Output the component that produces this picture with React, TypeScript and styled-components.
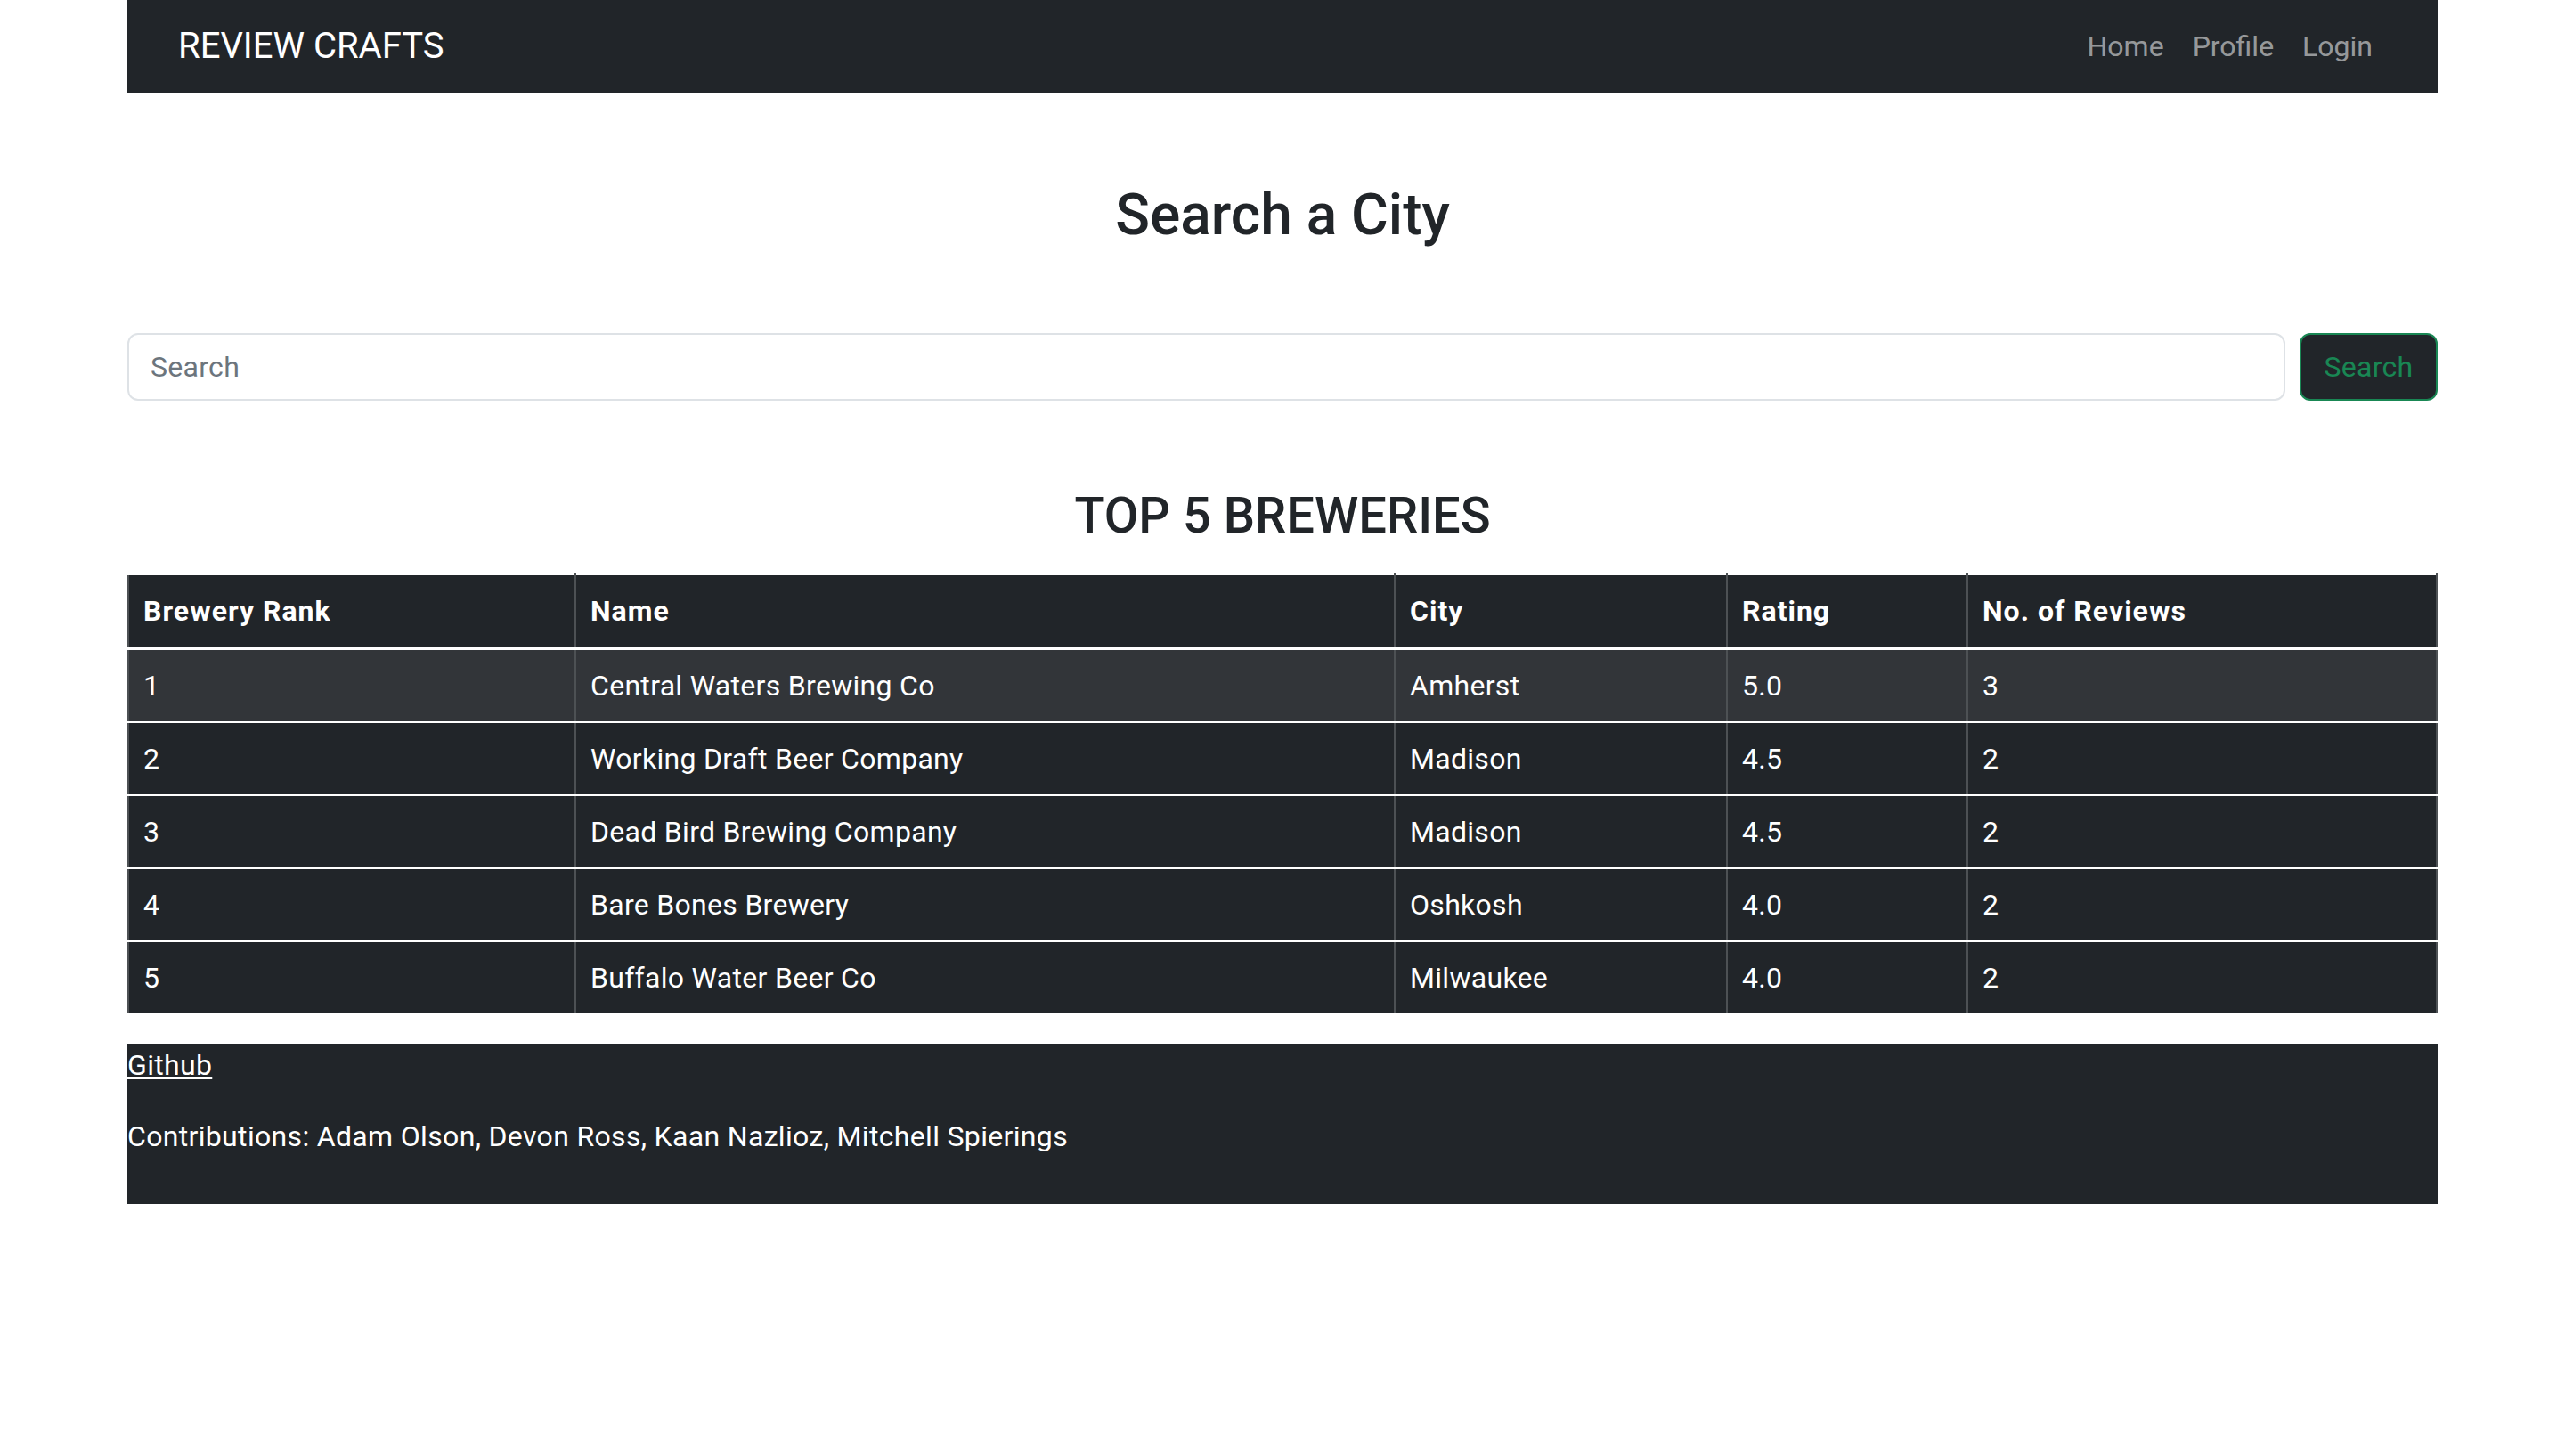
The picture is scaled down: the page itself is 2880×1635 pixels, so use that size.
import React from "react";
import styled, { createGlobalStyle } from "styled-components";

const GlobalStyle = createGlobalStyle`
  html, body { margin: 0; padding: 0; background: #ffffff; }
  body {
    font-family: Roboto, "Liberation Sans", Arial, sans-serif;
    color: #212529;
    font-size: 32px;
    line-height: 1.5;
  }
  * { box-sizing: border-box; }
`;

const Page = styled.div`
  width: 2594px;
  margin: 0 auto;
`;

const Navbar = styled.nav`
  height: 104px;
  background: #212529;
  display: flex;
  align-items: center;
  justify-content: space-between;
  padding: 0 57px 0 57px;
`;

const Brand = styled.a`
  font-size: 40px;
  color: #ffffff;
  text-decoration: none;
  line-height: 1.5;
`;

const NavLinks = styled.div`
  display: flex;
  align-items: center;
`;

const NavLink = styled.a`
  font-size: 32px;
  padding: 0 16px;
  color: rgba(255, 255, 255, 0.55);
  text-decoration: none;
`;

const Main = styled.main`
  display: flex;
  flex-direction: column;
`;

const Title = styled.h2`
  margin: 100px 0 0;
  font-size: 64px;
  font-weight: 500;
  line-height: 1.2;
  text-align: center;
`;

const SearchForm = styled.form`
  display: flex;
  gap: 16px;
  margin-top: 93px;
`;

const SearchInput = styled.input`
  flex: 1;
  height: 76px;
  border: 2px solid #dee2e6;
  border-radius: 12px;
  padding: 0 24px;
  font-family: inherit;
  font-size: 32px;
  letter-spacing: 0.3px;
  color: #212529;
  outline: none;
  &::placeholder { color: #6c757d; }
`;

const SearchButton = styled.button`
  width: 155px;
  height: 76px;
  background: #212529;
  border: 2px solid #198754;
  border-radius: 12px;
  color: #198754;
  font-family: inherit;
  font-size: 32px;
  letter-spacing: 0.3px;
  padding: 0;
`;

const SectionTitle = styled.h3`
  margin: 96px 0 31px;
  font-size: 56px;
  font-weight: 500;
  line-height: 1.2;
  text-align: center;
`;

const Table = styled.table`
  width: 2592px;
  margin: 0 auto 32px;
  border-collapse: collapse;
  table-layout: fixed;
  color: #ffffff;
  background: #212529;
`;

const Cell = styled.td<{ $head?: boolean }>`
  padding: 16px 16px;
  font-size: 32px;
  line-height: 48px;
  text-align: left;
  font-weight: ${(p) => (p.$head ? 700 : 400)};
  letter-spacing: ${(p) => (p.$head ? "1px" : "0.3px")};
  border-left: 2px solid #4d5154;
  border-right: 2px solid #4d5154;
  border-top: 2px solid #ffffff;
  border-bottom: ${(p) => (p.$head ? "4px" : "2px")} solid #ffffff;
`;

const Row = styled.tr<{ $active?: boolean }>`
  background: ${(p) => (p.$active ? "#323539" : "#212529")};
`;

const Footer = styled.footer`
  background: #212529;
  color: #ffffff;
  padding-bottom: 20px;
`;

const FooterPara = styled.p`
  margin: 0 0 32px;
  font-size: 32px;
  line-height: 48px;
  letter-spacing: 0.33px;
`;

const FooterLink = styled.a`
  color: #ffffff;
  text-decoration: underline;
`;

const columns = [
  { label: "Brewery Rank", width: 502 },
  { label: "Name", width: 920 },
  { label: "City", width: 373 },
  { label: "Rating", width: 270 },
  { label: "No. of Reviews", width: 527 },
];

const breweries = [
  ["1", "Central Waters Brewing Co", "Amherst", "5.0", "3"],
  ["2", "Working Draft Beer Company", "Madison", "4.5", "2"],
  ["3", "Dead Bird Brewing Company", "Madison", "4.5", "2"],
  ["4", "Bare Bones Brewery", "Oshkosh", "4.0", "2"],
  ["5", "Buffalo Water Beer Co", "Milwaukee", "4.0", "2"],
];

export default function App() {
  return (
    <>
      <GlobalStyle />
      <Page>
        <Navbar>
          <Brand href="#">REVIEW CRAFTS</Brand>
          <NavLinks>
            <NavLink href="#">Home</NavLink>
            <NavLink href="#">Profile</NavLink>
            <NavLink href="#">Login</NavLink>
          </NavLinks>
        </Navbar>
        <Main>
          <Title>Search a City</Title>
          <SearchForm onSubmit={(e) => e.preventDefault()}>
            <SearchInput placeholder="Search" />
            <SearchButton type="submit">Search</SearchButton>
          </SearchForm>
          <SectionTitle>TOP 5 BREWERIES</SectionTitle>
          <Table>
            <colgroup>
              {columns.map((c) => (
                <col key={c.label} style={{ width: c.width }} />
              ))}
            </colgroup>
            <thead>
              <Row>
                {columns.map((c) => (
                  <Cell as="th" $head key={c.label}>
                    {c.label}
                  </Cell>
                ))}
              </Row>
            </thead>
            <tbody>
              {breweries.map((b, i) => (
                <Row key={b[0]} $active={i === 0}>
                  {b.map((v, j) => (
                    <Cell key={j}>{v}</Cell>
                  ))}
                </Row>
              ))}
            </tbody>
          </Table>
          <Footer>
            <FooterPara>
              <FooterLink href="#">Github</FooterLink>
            </FooterPara>
            <FooterPara>
              Contributions: Adam Olson, Devon Ross, Kaan Nazlioz, Mitchell Spierings
            </FooterPara>
          </Footer>
        </Main>
      </Page>
    </>
  );
}
